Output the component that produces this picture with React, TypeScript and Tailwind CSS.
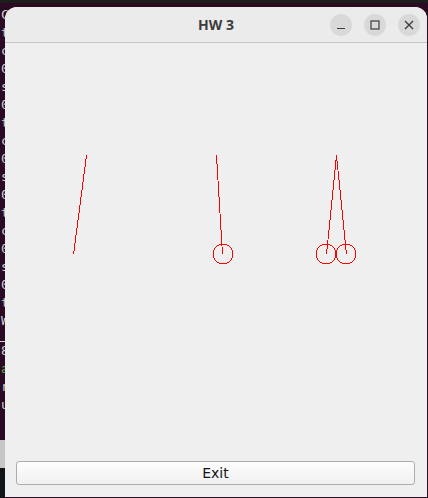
import React from "react";

const termRows: { t: string; c?: string }[] = [
  { t: "Compiling HW3 ..." },
  { t: "three_pendulum.cpp" },
  { t: "compile ok" },
  { t: "0 warnings" },
  { t: "started" },
  { t: "0.000 ms" },
  { t: "theta = 0.12" },
  { t: "compile ok" },
  { t: "0 warnings" },
  { t: "started" },
  { t: "0.000 ms" },
  { t: "theta = 0.10" },
  { t: "compile ok" },
  { t: "0 warnings" },
  { t: "started" },
  { t: "0.000 ms" },
  { t: "theta = 0.09" },
  { t: "Window shown" },
];

const termRows2: { t: string; c?: string }[] = [
  { t: "8 files" },
  { t: "a.out", c: "text-[#4fb34a]" },
  { t: "run" },
  { t: "user" },
];

function WinButton({ children }: { children: React.ReactNode }) {
  return (
    <div className="w-[22px] h-[22px] rounded-full bg-[#d9d9d9] flex items-center justify-center">
      {children}
    </div>
  );
}

export default function App() {
  return (
    <div className="relative w-[428px] h-[498px] overflow-hidden bg-[#2c0a22] flex flex-col">
      <div className="h-[3px] shrink-0 bg-[#1d1d1d]" />
      <div className="flex-1 flex flex-col pt-[3px] whitespace-pre font-['DejaVu_Sans_Mono',monospace] text-[13px] leading-[18px] text-[#cdd3da]">
        <div className="pl-[1px] flex flex-col">
          {termRows.map((r, i) => (
            <div key={i} className={r.c}>
              {r.t}
            </div>
          ))}
        </div>
        <div className="mt-[11px] w-[6px] h-px bg-[#cdd3da]" />
        <div className="pl-[1px] flex flex-col">
          {termRows2.map((r, i) => (
            <div key={i} className={r.c}>
              {r.t}
            </div>
          ))}
        </div>
        <div className="mt-auto w-[6px] h-[28px] bg-[#c6c6c6]" />
        <div className="w-[6px] h-[30px] bg-[#0f1519]" />
      </div>

      <div className="absolute left-[5px] top-[7px] w-[422px] h-[490px] rounded-t-[12px] bg-[#efefef] flex flex-col overflow-hidden">
        <div className="relative h-[36px] shrink-0 bg-[#ebebeb] border-b border-[#c4c4c4] flex items-center justify-end gap-[12px] pr-[7px]">
          <div className="absolute inset-0 flex items-center justify-center font-['Noto_Sans',sans-serif] font-bold text-[14px] text-[#3c3c3c]">
            HW 3
          </div>
          <WinButton>
            <svg width="10" height="10" viewBox="0 0 10 10">
              <line x1="1" y1="8.5" x2="9" y2="8.5" stroke="#3c3c3c" strokeWidth="1.2" />
            </svg>
          </WinButton>
          <WinButton>
            <svg width="10" height="10" viewBox="0 0 10 10">
              <rect x="1" y="1" width="8" height="8" fill="none" stroke="#3c3c3c" strokeWidth="1.2" />
            </svg>
          </WinButton>
          <WinButton>
            <svg width="10" height="10" viewBox="0 0 10 10">
              <path d="M1 1 L9 9 M9 1 L1 9" stroke="#3c3c3c" strokeWidth="1.4" />
            </svg>
          </WinButton>
        </div>

        <div className="flex-1 min-h-0">
          <svg width="422" height="410" className="block">
            <g transform="translate(-5,-43)" stroke="#ff0000" strokeWidth="1" fill="none" shapeRendering="crispEdges">
              <line x1="86.5" y1="155.5" x2="73.5" y2="254.5" />
              <line x1="216.5" y1="155.5" x2="222.5" y2="254.5" />
              <circle cx="223" cy="254" r="10" />
              <line x1="336.5" y1="155.5" x2="326.5" y2="254.5" />
              <line x1="336.5" y1="155.5" x2="346.5" y2="254.5" />
              <circle cx="326" cy="254" r="10" />
              <circle cx="346" cy="254" r="10" />
            </g>
          </svg>
        </div>

        <div className="shrink-0 pl-[11px] pr-[12px] pb-[12px]">
          <button className="w-full h-[24px] rounded-[3px] border border-[#adadad] bg-gradient-to-b from-[#fdfdfd] to-[#f0f0f0] flex items-center justify-center font-['DejaVu_Sans',sans-serif] text-[14px] text-[#141414]">
            Exit
          </button>
        </div>
      </div>
    </div>
  );
}
